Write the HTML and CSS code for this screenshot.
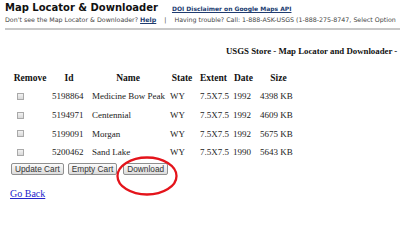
FILE: index.html
```html
<!DOCTYPE html>
<html>
<head>
<meta charset="utf-8">
<link rel="stylesheet" href="styles.css">
</head>
<body>
<div class="page">
  <div class="masthead">
    <div class="title-row">
      <h1 class="title">Map Locator &amp; Downloader</h1>
      <a class="disclaimer" href="#">DOI Disclaimer on Google Maps API</a>
    </div>
    <p class="help">Don't see the Map Locator &amp; Downloader? <a href="#">Help</a><span class="sep">|</span>Having trouble? Call: 1-888-ASK-USGS (1-888-275-8747, Select Option</p>
  </div>
  <div class="rule"></div>
  <h2 class="store">USGS Store - Map Locator and Downloader -</h2>
  <table class="cart">
    <colgroup>
      <col class="c-remove"><col class="c-id"><col class="c-name"><col class="c-state"><col class="c-extent"><col class="c-date"><col class="c-size">
    </colgroup>
    <thead>
      <tr><th>Remove</th><th>Id</th><th>Name</th><th>State</th><th>Extent</th><th>Date</th><th>Size</th></tr>
    </thead>
    <tbody>
      <tr><td><input type="checkbox" class="box"></td><td>5198864</td><td>Medicine Bow Peak</td><td>WY</td><td>7.5X7.5</td><td>1992</td><td>4398 KB</td></tr>
      <tr><td><input type="checkbox" class="box"></td><td>5194971</td><td>Centennial</td><td>WY</td><td>7.5X7.5</td><td>1992</td><td>4609 KB</td></tr>
      <tr><td><input type="checkbox" class="box"></td><td>5199091</td><td>Morgan</td><td>WY</td><td>7.5X7.5</td><td>1992</td><td>5675 KB</td></tr>
      <tr><td><input type="checkbox" class="box"></td><td>5200462</td><td>Sand Lake</td><td>WY</td><td>7.5X7.5</td><td>1990</td><td>5643 KB</td></tr>
    </tbody>
  </table>
  <div class="actions">
    <button class="btn">Update Cart</button>
    <button class="btn">Empty Cart</button>
    <span class="circled">
      <button class="btn">Download</button>
      <svg class="ring" viewBox="0 0 62 40" width="62" height="40"><ellipse cx="31" cy="20" rx="29.5" ry="18.5" fill="none" stroke="#e4141b" stroke-width="2.3"/></svg>
    </span>
  </div>
  <a class="back" href="#">Go Back</a>
</div>
</body>
</html>
```
FILE: styles.css
```css
html, body {
  margin: 0;
  padding: 0;
  background: #ffffff;
}
body {
  width: 400px;
  height: 248px;
  overflow: hidden;
  font-family: "Liberation Serif", "Times New Roman", serif;
  color: #111;
}
.page {
  width: 400px;
  white-space: nowrap;
}
.masthead {
  padding: 2px 0 0 5px;
}
.title-row {
  display: flex;
  align-items: baseline;
  gap: 14px;
}
.title {
  margin: 0;
  font-family: "DejaVu Sans", Verdana, sans-serif;
  font-weight: bold;
  font-size: 10px;
  line-height: 12px;
  color: #111;
}
.disclaimer {
  font-family: "DejaVu Sans", Verdana, sans-serif;
  font-weight: bold;
  font-size: 6px;
  color: #203c70;
  text-decoration: underline;
}
.help {
  margin: 2px 0 0 0;
  font-family: "DejaVu Sans", Verdana, sans-serif;
  font-size: 6.3px;
  line-height: 8px;
  color: #444;
}
.help a {
  color: #203c70;
  font-weight: bold;
}
.sep {
  display: inline-block;
  margin: 0 8px;
}
.rule {
  height: 2px;
  margin: 4px 0 0 5px;
  background: #c8c8c8;
}
.store {
  margin: 15px 0 0 0;
  padding-left: 226px;
  font-size: 8.8px;
  line-height: 12px;
  font-weight: bold;
  color: #111;
}
.cart {
  margin: 12px 0 0 11px;
  border-collapse: collapse;
  table-layout: fixed;
  width: 289px;
  font-size: 9px;
  color: #222;
}
.c-remove { width: 38px; }
.c-id { width: 40px; }
.c-name { width: 78px; }
.c-state { width: 30px; }
.c-extent { width: 33px; }
.c-date { width: 27px; }
.c-size { width: 43px; }
.cart th {
  height: 18px;
  padding: 0;
  text-align: center;
  font-size: 9.5px;
  font-weight: bold;
  color: #111;
}
.cart td {
  height: 18.7px;
  padding: 0 0 0 3px;
  text-align: left;
}
.box {
  appearance: none;
  -webkit-appearance: none;
  display: block;
  width: 7px;
  height: 7px;
  margin: 0 0 0 3px;
  border: 1px solid #a9a9a9;
  background: linear-gradient(#f2f2f2, #d9d9d9);
}
.actions {
  display: flex;
  align-items: flex-start;
  gap: 4px;
  margin: 1px 0 0 11px;
}
.btn {
  height: 12px;
  padding: 0 3px;
  font-family: "Liberation Sans", Arial, sans-serif;
  font-size: 8.3px;
  line-height: 10px;
  color: #333;
  border: 1px solid #8f8f8f;
  border-radius: 2px;
  background: linear-gradient(#fbfbfb, #dcdcdc);
}
.circled {
  position: relative;
  display: flex;
  margin-left: 2px;
}
.ring {
  position: absolute;
  left: -7px;
  top: -7px;
}
.back {
  display: inline-block;
  margin: 13px 0 0 10px;
  font-size: 10px;
  color: #2424cc;
  text-decoration: underline;
}
```
